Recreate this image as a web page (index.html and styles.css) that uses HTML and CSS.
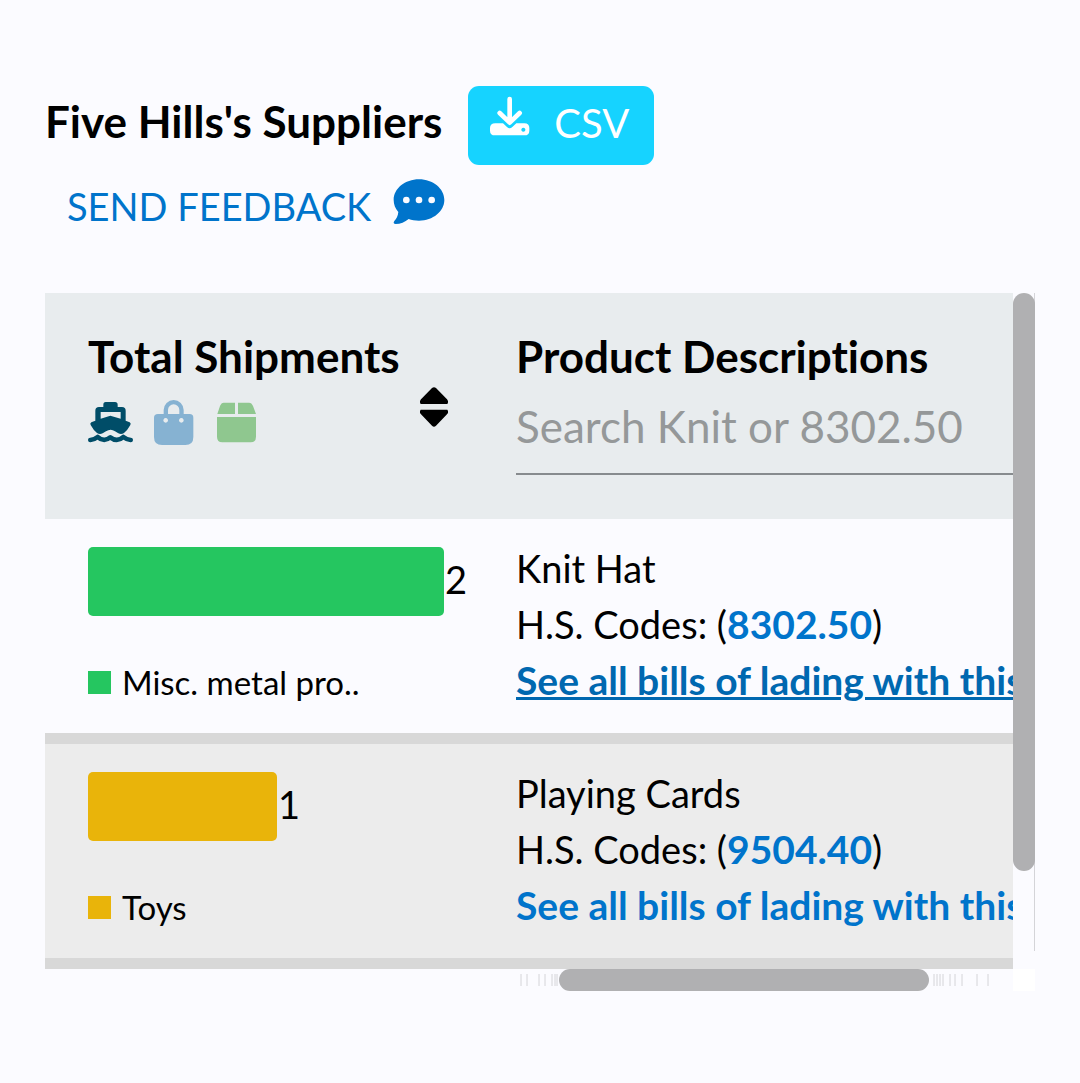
FILE: index.html
```html
<!DOCTYPE html>
<html lang="en">
<head>
<meta charset="utf-8">
<meta name="viewport" content="width=device-width, initial-scale=1">
<title>Five Hills's Suppliers</title>
<link rel="stylesheet" href="styles.css">
</head>
<body>
<main class="page">
  <header class="page-head">
    <h1 class="title">Five Hills's Suppliers</h1>
    <button class="csv-button" type="button">
      <svg class="icon-download" viewBox="330 80 120 120" aria-hidden="true">
        <path fill="currentColor" fill-rule="evenodd" d="M346 162H369L381 173Q389 181 397 173L409 162H433Q448 162 448 176V184Q448 198 433 198H345Q330 198 330 184V176Q330 162 346 162ZM430 175a6 6 0 1 0 0.1 0Z"/>
        <path fill="none" stroke="currentColor" stroke-width="14" stroke-linecap="round" stroke-linejoin="round" d="M389 89V156M359 131L389 160L419 131"/>
      </svg>
      <span>CSV</span>
    </button>
    <a class="feedback" href="#feedback">
      <span>SEND FEEDBACK</span>
      <svg class="icon-comment" viewBox="40 326 156 138" aria-hidden="true">
        <path fill="currentColor" d="M118 327C160 327 194 355 194 389S160 451 118 451C106 451 96 449 87 446C76 455 62 461 48 461C42 461 40 457 44 452C50 446 55 437 56 425C47 415 42 403 42 389C42 355 76 327 118 327Z"/>
        <g class="comment-dots"><circle cx="80" cy="389" r="10"/><circle cx="118" cy="389" r="10"/><circle cx="156" cy="389" r="10"/></g>
      </svg>
    </a>
  </header>

  <section class="grid" aria-label="Suppliers">
    <div class="viewport">
      <table class="table">
        <colgroup><col class="col-shipments"><col class="col-products"></colgroup>
        <thead>
          <tr>
            <th scope="col">
              <div class="head-label">Total Shipments</div>
              <div class="head-tools">
                <div class="modes">
                  <button class="icon-button ferry" type="button" aria-label="Sea shipments">
                    <svg class="icon-mode" viewBox="141 360 135 135" aria-hidden="true">
                      <path fill="currentColor" fill-rule="evenodd" d="M194 366H222Q230 366 230 374V381H243Q254 381 254 392V422L266 427Q271 430 268 435Q260 450 249 459Q241 465 232 460L222 454Q209 445 195 454L185 460Q176 465 168 459Q157 450 149 435Q146 430 151 427L163 422V392Q163 381 174 381H187V374Q187 366 194 366ZM179 396V416L208 407L239 416V396Z"/>
                      <path fill="none" stroke="currentColor" stroke-width="14" stroke-linecap="round" stroke-linejoin="round" d="M148 480Q160 479 170 471Q189 488 208 472Q228 488 247 471Q257 479 269 480"/>
                    </svg>
                  </button>
                  <button class="icon-button bag" type="button" aria-label="Purchases">
                    <svg class="icon-mode" viewBox="336 360 135 135" aria-hidden="true">
                      <path fill="currentColor" fill-rule="evenodd" d="M357 402H374V390A30 30 0 0 1 434 390V402H452Q463 402 463 413V471Q463 495 439 495H369Q345 495 345 471V413Q345 402 357 402ZM387 402H421V390A17 17 0 0 0 387 390ZM380 414a7 7 0 1 0 0.1 0ZM427 414a7 7 0 1 0 0.1 0Z"/>
                    </svg>
                  </button>
                  <button class="icon-button box" type="button" aria-label="Parcels">
                    <svg class="icon-mode" viewBox="522 360 135 135" aria-hidden="true">
                      <path fill="currentColor" d="M551 368H585V402H532L540 378Q544 368 551 368ZM594 368H627Q635 368 639 378L648 402H594ZM531 411H648V470Q648 487 632 487H547Q531 487 531 470Z"/>
                    </svg>
                  </button>
                </div>
                <button class="icon-button sort" type="button" aria-label="Sort by total shipments">
                  <svg class="icon-sort" viewBox="1140 320 84 120" aria-hidden="true">
                    <path fill="currentColor" d="M1176 323Q1182 318 1188 323L1221 357Q1227 364 1222 371H1142Q1137 364 1143 357ZM1142 388H1222Q1227 396 1221 402L1188 436Q1182 442 1176 436L1143 402Q1137 396 1142 388Z"/>
                  </svg>
                </button>
              </div>
            </th>
            <th scope="col">
              <label class="head-label" for="product-search">Product Descriptions</label>
              <input class="search" id="product-search" type="text" placeholder="Search Knit or 8302.50">
            </th>
          </tr>
        </thead>
        <tbody>
          <tr>
            <td>
              <div class="bar-row"><div class="bar green" style="width: 356px"></div><span>2</span></div>
              <div class="legend"><i class="swatch green"></i>Misc. metal pro..</div>
            </td>
            <td class="product">
              <div>Knit Hat</div>
              <div>H.S. Codes: (<a href="#hs-830250">8302.50</a>)</div>
              <div><a class="hovered" href="#bills-830250">See all bills of lading with this</a></div>
            </td>
          </tr>
          <tr>
            <td>
              <div class="bar-row"><div class="bar yellow" style="width: 189px"></div><span>1</span></div>
              <div class="legend"><i class="swatch yellow"></i>Toys</div>
            </td>
            <td class="product">
              <div>Playing Cards</div>
              <div>H.S. Codes: (<a href="#hs-950440">9504.40</a>)</div>
              <div><a href="#bills-950440">See all bills of lading with this</a></div>
            </td>
          </tr>
        </tbody>
      </table>
    </div>
    <div class="track-y"><div class="thumb-y"></div></div>
    <div class="track-x">
      <svg class="ticks" viewBox="0 0 40 22" aria-hidden="true"><path d="M2 5V17M8 5V17M20 5V17M26 5V17M33 5V17M36 5V17M38 5V17"/></svg>
      <div class="thumb-x"></div>
      <svg class="ticks ticks-end" viewBox="0 0 62 22" aria-hidden="true"><path d="M5 5V17M8 5V17M11 5V17M14 5V17M21 5V17M26 5V17M33 5V17M48 5V17M59 5V17"/></svg>
    </div>
    <div class="corner"></div>
  </section>
</main>
</body>
</html>
```
FILE: styles.css
```css
* { box-sizing: border-box; }

body {
  margin: 0;
  background: #fbfbff;
  color: #000;
  font-family: Lato, "Liberation Sans", sans-serif;
  font-size: 38px;
  font-variant-ligatures: none;
  line-height: 56px;
}

button, input { font: inherit; }

a { color: #0074cb; text-decoration: none; }

.page { padding: 86px 45px 92px; }

.page-head {
  display: flex;
  flex-wrap: wrap;
  column-gap: 26px;
  margin-bottom: 60px;
}

.title {
  margin: 0;
  font-size: 44px;
  font-weight: 700;
  line-height: 70px;
}

.csv-button {
  display: flex;
  gap: 24px;
  height: 79px;
  padding: 10px 25px 0 22px;
  border: 0;
  border-radius: 11px;
  background: #16d3ff;
  color: #fff;
  font-size: 40px;
  line-height: 54px;
}

.icon-download { width: 40px; height: 40px; }

.feedback {
  display: flex;
  gap: 22px;
  margin: 14px 200px 0 22px;
  line-height: 54px;
}

.icon-comment { width: 52px; height: 46px; }
.comment-dots { fill: #fbfbff; }

.grid {
  display: grid;
  grid-template-columns: minmax(0, 1fr) 22px;
  grid-template-rows: auto 22px;
}

.viewport { overflow: hidden; }

.table {
  width: 1200px;
  table-layout: fixed;
  border-collapse: separate;
  border-spacing: 0;
}

.col-shipments { width: 428px; }

th, td {
  padding: 0 0 0 43px;
  text-align: left;
  vertical-align: top;
}

th {
  height: 226px;
  padding-top: 35px;
  background: #e8ecee;
  font-weight: 400;
}

td {
  height: 225px;
  padding-top: 28px;
  border-bottom: 11px solid #d8d8d8;
}

tbody tr:nth-child(even) { background: #ececec; }

.head-label {
  display: block;
  font-size: 44px;
  font-weight: 700;
}

.head-tools {
  display: flex;
  justify-content: space-between;
  padding-top: 3px;
  padding-right: 25px;
}

.modes { display: flex; gap: 18px; padding-top: 13px; }

.icon-button {
  display: block;
  padding: 0;
  border: 0;
  background: none;
  line-height: 0;
}

.icon-mode { width: 45px; height: 45px; }
.icon-sort { width: 28px; height: 40px; }
.ferry { color: #004d68; }
.bag { color: #86b2d2; }
.box { color: #8fc78f; }
.sort { align-self: flex-start; color: #000; }

.search {
  display: block;
  width: 100%;
  height: 91px;
  padding: 0 0 6px;
  border: 0;
  border-bottom: 2px solid #878b8e;
  background: none;
  font-size: 44px;
  outline: 0;
}

.search::placeholder { color: #959899; opacity: 1; }

.bar-row {
  display: flex;
  gap: 1px;
  height: 69px;
  line-height: 64px;
}

.bar { height: 69px; border-radius: 5px; }
.green { background: #25c660; }
.yellow { background: #e9b40a; }

.legend {
  display: flex;
  align-items: center;
  gap: 11px;
  margin-top: 38px;
  font-size: 33px;
}

.swatch { width: 23px; height: 23px; }

.product { padding-top: 21px; white-space: nowrap; }
.product a { font-size: 39px; font-weight: 700; line-height: 1; }
.product .hovered {
  color: #0068b0;
  text-decoration: underline;
  text-decoration-thickness: 3px;
}

.track-y {
  background: linear-gradient(#d4d4d8, #d4d4d8) right top / 1px 658px no-repeat;
}

.thumb-y {
  height: 578px;
  border-radius: 11px;
  background: #b0b0b2;
}

.track-x {
  display: flex;
  justify-content: flex-end;
  padding-right: 22px;
}

.thumb-x {
  width: 370px;
  border-radius: 11px;
  background: #b0b0b2;
}

.ticks {
  width: 40px;
  height: 22px;
  fill: none;
  stroke: #d4d4d8;
  stroke-width: 1;
}

.ticks-end { width: 62px; }

.corner { background: #fff; }
```
